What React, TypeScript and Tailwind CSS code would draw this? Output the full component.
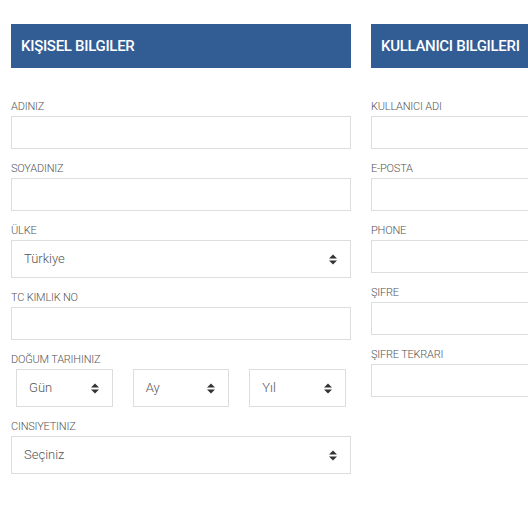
import React from 'react';

const font = { fontFamily: 'Roboto, "Noto Sans", sans-serif' };

function SortIcon() {
  return (
    <svg width="8" height="11" viewBox="0 0 8 11" className="shrink-0 text-[#333]">
      <path d="M0 4.5 L4 0.5 L8 4.5 Z" fill="currentColor" />
      <path d="M0 6.5 L4 10.5 L8 6.5 Z" fill="currentColor" />
    </svg>
  );
}

function Label({ children }: { children: React.ReactNode }) {
  return (
    <label className="block h-4 leading-[20px] mb-[3px] text-[11px] font-light uppercase text-[#555] tracking-[-0.2px]">
      {children}
    </label>
  );
}

function TextField({ label, type = 'text' }: { label: string; type?: string }) {
  return (
    <div className="mb-[10px]">
      <Label>{label}</Label>
      <input
        type={type}
        className="block w-full h-[33px] border border-[#dddddd] bg-white px-3 text-[13px] text-[#555] outline-none"
      />
    </div>
  );
}

function SelectBox({ value, className = '' }: { value: string; className?: string }) {
  return (
    <div
      className={`flex items-center justify-between h-[38px] border border-[#dddddd] bg-white pl-3 pr-[13px] text-[13px] font-light text-[#555] ${className}`}
    >
      <span>{value}</span>
      <SortIcon />
    </div>
  );
}

function SectionHeader({ title }: { title: string }) {
  return (
    <div className="h-11 bg-[#325d94] flex items-center px-[10px] mb-[29px]">
      <h2 className="text-white text-[15px] font-medium tracking-[-0.3px] whitespace-nowrap">{title}</h2>
    </div>
  );
}

export default function App() {
  return (
    <div className="w-full min-h-[506px] overflow-hidden bg-white" style={font}>
      <div className="flex gap-5 pl-[11px] pt-6 w-[760px]">
        <div className="w-[340px] shrink-0">
          <SectionHeader title="KIŞISEL BILGILER" />
          <TextField label="ADINIZ" />
          <TextField label="SOYADINIZ" />
          <div className="mb-[10px]">
            <Label>ÜLKE</Label>
            <SelectBox value="Türkiye" />
          </div>
          <TextField label="TC KIMLIK NO" />
          <div className="mb-[10px]">
            <Label>DOĞUM TARIHINIZ</Label>
            <div className="grid grid-cols-3 gap-5 px-[5px]">
              <SelectBox value="Gün" />
              <SelectBox value="Ay" />
              <SelectBox value="Yıl" />
            </div>
          </div>
          <div className="mb-[10px]">
            <Label>CINSIYETINIZ</Label>
            <SelectBox value="Seçiniz" />
          </div>
        </div>
        <div className="w-[340px] shrink-0">
          <SectionHeader title="KULLANICI BILGILERI" />
          <TextField label="KULLANICI ADI" />
          <TextField label="E-POSTA" type="email" />
          <TextField label="PHONE" />
          <TextField label="ŞIFRE" type="password" />
          <TextField label="ŞIFRE TEKRARI" type="password" />
        </div>
      </div>
    </div>
  );
}
